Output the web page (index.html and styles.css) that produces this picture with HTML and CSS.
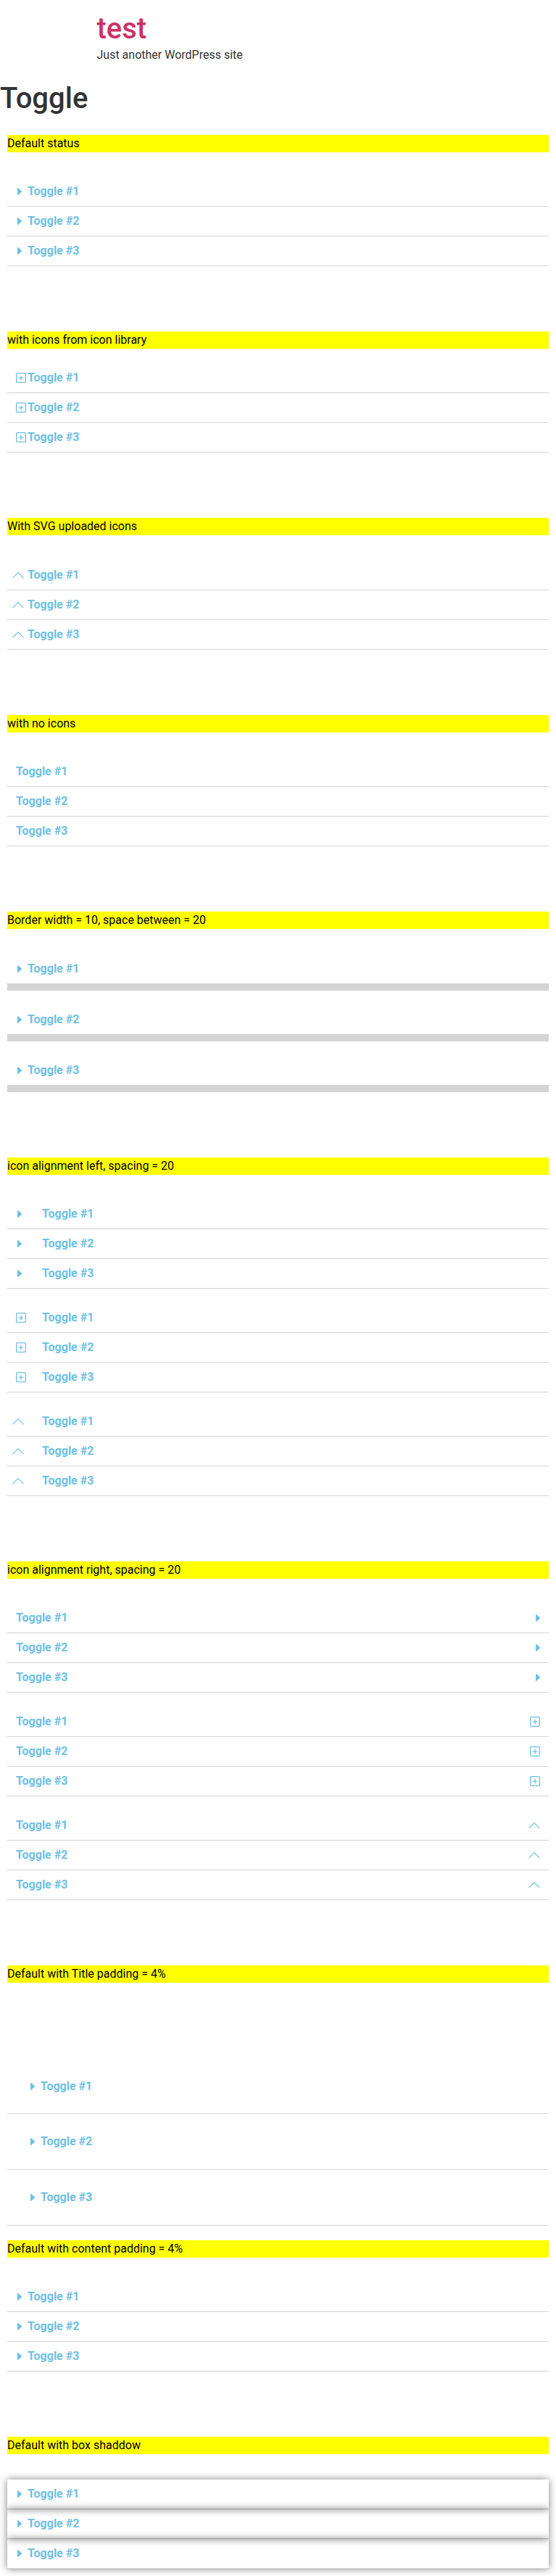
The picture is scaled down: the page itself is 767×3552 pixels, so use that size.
FILE: index.html
```html
<!DOCTYPE html>
<html lang="en">
<head>
<meta charset="utf-8">
<meta name="viewport" content="width=device-width, initial-scale=1">
<title>Toggle</title>
<link rel="stylesheet" href="styles.css">
</head>
<body>
<svg class="sprite" width="0" height="0" aria-hidden="true">
  <symbol id="caret" viewBox="0 0 16 16"><path d="M0 3.6Q0 2.7 .9 3L5.9 7.4Q6.5 8 5.9 8.6L.9 13Q0 13.3 0 12.4Z" fill="currentColor"/></symbol>
  <symbol id="plus" viewBox="0 0 16 16"><rect x=".65" y="1.65" width="12.7" height="12.7" rx="1" fill="none" stroke="currentColor" stroke-width="1.3"/><path d="M3.7 8.2H10.3M7 4.9V11.5" stroke="currentColor" stroke-width="1.3" fill="none"/></symbol>
  <symbol id="chevron" viewBox="0 0 16 16"><path d="M.5 12.2L8 4.6L15.5 12.2" stroke="currentColor" stroke-width="1.05" fill="none"/></symbol>
</svg>
<header class="site-header">
  <div class="site-title">test</div>
  <p class="site-tagline">Just another WordPress site</p>
</header>
<main>
  <h1 class="page-title">Toggle</h1>

  <section class="demo">
    <p class="label">Default status</p>
    <div class="toggle">
      <div class="item"><span class="icon caret"><svg><use href="#caret"/></svg></span><a>Toggle #1</a></div>
      <div class="item"><span class="icon caret"><svg><use href="#caret"/></svg></span><a>Toggle #2</a></div>
      <div class="item"><span class="icon caret"><svg><use href="#caret"/></svg></span><a>Toggle #3</a></div>
    </div>
  </section>

  <section class="demo compact">
    <p class="label">with icons from icon library</p>
    <div class="toggle">
      <div class="item"><span class="icon plus"><svg><use href="#plus"/></svg></span><a>Toggle #1</a></div>
      <div class="item"><span class="icon plus"><svg><use href="#plus"/></svg></span><a>Toggle #2</a></div>
      <div class="item"><span class="icon plus"><svg><use href="#plus"/></svg></span><a>Toggle #3</a></div>
    </div>
  </section>

  <section class="demo">
    <p class="label">With SVG uploaded icons</p>
    <div class="toggle">
      <div class="item"><span class="icon chevron"><svg><use href="#chevron"/></svg></span><a>Toggle #1</a></div>
      <div class="item"><span class="icon chevron"><svg><use href="#chevron"/></svg></span><a>Toggle #2</a></div>
      <div class="item"><span class="icon chevron"><svg><use href="#chevron"/></svg></span><a>Toggle #3</a></div>
    </div>
  </section>

  <section class="demo">
    <p class="label">with no icons</p>
    <div class="toggle">
      <div class="item"><a>Toggle #1</a></div>
      <div class="item"><a>Toggle #2</a></div>
      <div class="item"><a>Toggle #3</a></div>
    </div>
  </section>

  <section class="demo">
    <p class="label">Border width = 10, space between = 20</p>
    <div class="toggle thick">
      <div class="item"><span class="icon caret"><svg><use href="#caret"/></svg></span><a>Toggle #1</a></div>
      <div class="item"><span class="icon caret"><svg><use href="#caret"/></svg></span><a>Toggle #2</a></div>
      <div class="item"><span class="icon caret"><svg><use href="#caret"/></svg></span><a>Toggle #3</a></div>
    </div>
  </section>

  <section class="demo">
    <p class="label">icon alignment left, spacing = 20</p>
    <div class="toggle spaced">
      <div class="item"><span class="icon caret"><svg><use href="#caret"/></svg></span><a>Toggle #1</a></div>
      <div class="item"><span class="icon caret"><svg><use href="#caret"/></svg></span><a>Toggle #2</a></div>
      <div class="item"><span class="icon caret"><svg><use href="#caret"/></svg></span><a>Toggle #3</a></div>
    </div>
    <div class="toggle spaced">
      <div class="item"><span class="icon plus"><svg><use href="#plus"/></svg></span><a>Toggle #1</a></div>
      <div class="item"><span class="icon plus"><svg><use href="#plus"/></svg></span><a>Toggle #2</a></div>
      <div class="item"><span class="icon plus"><svg><use href="#plus"/></svg></span><a>Toggle #3</a></div>
    </div>
    <div class="toggle spaced">
      <div class="item"><span class="icon chevron"><svg><use href="#chevron"/></svg></span><a>Toggle #1</a></div>
      <div class="item"><span class="icon chevron"><svg><use href="#chevron"/></svg></span><a>Toggle #2</a></div>
      <div class="item"><span class="icon chevron"><svg><use href="#chevron"/></svg></span><a>Toggle #3</a></div>
    </div>
  </section>

  <section class="demo">
    <p class="label">icon alignment right, spacing = 20</p>
    <div class="toggle right">
      <div class="item"><span class="icon caret"><svg><use href="#caret"/></svg></span><a>Toggle #1</a></div>
      <div class="item"><span class="icon caret"><svg><use href="#caret"/></svg></span><a>Toggle #2</a></div>
      <div class="item"><span class="icon caret"><svg><use href="#caret"/></svg></span><a>Toggle #3</a></div>
    </div>
    <div class="toggle right">
      <div class="item"><span class="icon plus"><svg><use href="#plus"/></svg></span><a>Toggle #1</a></div>
      <div class="item"><span class="icon plus"><svg><use href="#plus"/></svg></span><a>Toggle #2</a></div>
      <div class="item"><span class="icon plus"><svg><use href="#plus"/></svg></span><a>Toggle #3</a></div>
    </div>
    <div class="toggle right">
      <div class="item"><span class="icon chevron"><svg><use href="#chevron"/></svg></span><a>Toggle #1</a></div>
      <div class="item"><span class="icon chevron"><svg><use href="#chevron"/></svg></span><a>Toggle #2</a></div>
      <div class="item"><span class="icon chevron"><svg><use href="#chevron"/></svg></span><a>Toggle #3</a></div>
    </div>
  </section>

  <section class="demo lowered">
    <p class="label">Default with Title padding = 4%</p>
    <div class="toggle padded">
      <div class="item"><span class="icon caret"><svg><use href="#caret"/></svg></span><a>Toggle #1</a></div>
      <div class="item"><span class="icon caret"><svg><use href="#caret"/></svg></span><a>Toggle #2</a></div>
      <div class="item"><span class="icon caret"><svg><use href="#caret"/></svg></span><a>Toggle #3</a></div>
    </div>
  </section>

  <section class="demo">
    <p class="label">Default with content padding = 4%</p>
    <div class="toggle">
      <div class="item"><span class="icon caret"><svg><use href="#caret"/></svg></span><a>Toggle #1</a></div>
      <div class="item"><span class="icon caret"><svg><use href="#caret"/></svg></span><a>Toggle #2</a></div>
      <div class="item"><span class="icon caret"><svg><use href="#caret"/></svg></span><a>Toggle #3</a></div>
    </div>
  </section>

  <section class="demo last">
    <p class="label">Default with box shaddow</p>
    <div class="toggle shadow">
      <div class="item"><span class="icon caret"><svg><use href="#caret"/></svg></span><a>Toggle #1</a></div>
      <div class="item"><span class="icon caret"><svg><use href="#caret"/></svg></span><a>Toggle #2</a></div>
      <div class="item"><span class="icon caret"><svg><use href="#caret"/></svg></span><a>Toggle #3</a></div>
    </div>
  </section>
</main>
</body>
</html>
```
FILE: styles.css
```css
* { box-sizing: border-box; }

body {
  margin: 0;
  background: #fff;
  color: #333;
  font-family: Roboto, sans-serif;
  font-size: 16px;
  line-height: 24px;
}

p, h1 { margin: 0; }

.sprite { display: block; }

.site-header {
  width: 500px;
  margin: 0 auto;
  padding: 16px 0;
}

.site-title {
  color: #c36;
  font-size: 40px;
  font-weight: 500;
  line-height: 48px;
}

.page-title {
  margin: 8px 0 16px;
  font-size: 40px;
  font-weight: 500;
  line-height: 48px;
}

.demo { padding: 10px 10px 80px; }
.demo.lowered { padding-bottom: 10px; }
.demo.last { padding-bottom: 10px; }

.label {
  margin-bottom: 34.4px;
  background: #ff0;
  color: #000;
}
.compact .label { margin-bottom: 20px; }
.lowered .label { margin-bottom: 104.4px; }

.toggle + .toggle { margin-top: 20px; }

.item {
  display: flex;
  padding: 12px;
  border-bottom: 1px solid #d4d4d4;
  color: #6ec1e4;
  font-weight: 700;
  line-height: 16px;
}

.icon {
  flex: none;
  display: flex;
  width: 16px;
  height: 16px;
}
.icon svg {
  flex: none;
  display: block;
  width: 16px;
  height: 16px;
  overflow: visible;
}
.caret svg { margin-left: 2px; }
.chevron svg { margin-left: -5px; }

.thick .item { border-bottom-width: 10px; }
.thick .item + .item { margin-top: 20px; }

.spaced .icon { margin-right: 20px; }

.right .item {
  flex-direction: row-reverse;
  justify-content: space-between;
}
.right .caret { width: 6px; }
.right .plus { width: 14px; }
.right .icon svg { margin-left: 0; }

.padded .item { padding: 4%; }

.shadow .item { box-shadow: 0 0 10px 0 rgba(0, 0, 0, .5); }
```
